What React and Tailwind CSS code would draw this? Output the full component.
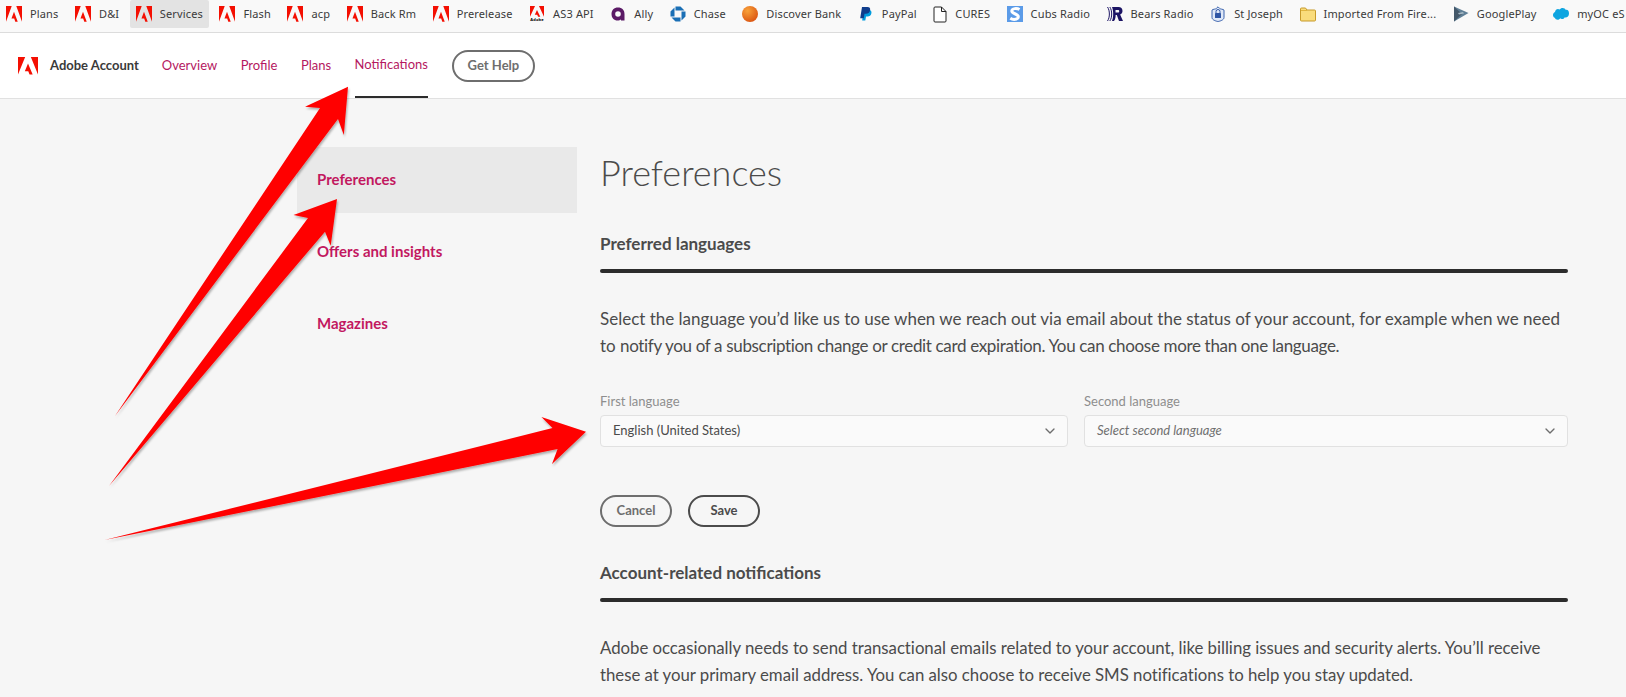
import React from "react";
import { ChevronDown } from "lucide-react";

const sans = "font-['Lato',sans-serif]";
const barFont = "font-['Noto_Sans',sans-serif]";

function AdobeMark({ className = "w-4 h-4" }) {
  return (
    <svg viewBox="0 0 24 22" className={className} preserveAspectRatio="none">
      <path fill="#f40f02" d="M0 0h8.6L0 21.5zM24 0h-8.6L24 21.5zM12 7.9l5.6 13.6h-3.7l-1.6-4.2H8.2z" />
    </svg>
  );
}

const Ally = () => (
  <svg viewBox="0 0 16 16" className="w-4 h-4">
    <path fill="#5b1a66" fillRule="evenodd" d="M8 1.5c4 0 6.500 2.600 6.500 6.500v6.500H11v-1.300C10 14.200 9 14.600 7.600 14.600 4 14.600 1.500 11.800 1.500 8 1.500 4.200 4 1.500 8 1.500zM8 5.200a2.800 2.800 0 100 5.600 2.800 2.800 0 000-5.600z" />
  </svg>
);
const Chase = () => (
  <svg viewBox="0 0 16 16" className="w-4 h-4">
    <path fill="#1a6fb5" d="M5.500 0.500H10.500L14.500 4.500H5.500zM15.500 5.500V10.500L11.500 14.500V5.500zM10.500 15.500H5.500L1.500 11.500H10.500zM0.500 10.500V5.500L4.500 1.500V10.500z" />
  </svg>
);
const Discover = () => (
  <svg viewBox="0 0 16 16" className="w-4 h-4">
    <defs>
      <radialGradient id="disc" cx="0.35" cy="0.3" r="0.8">
        <stop offset="0" stopColor="#f8a23a" />
        <stop offset="1" stopColor="#d9500f" />
      </radialGradient>
    </defs>
    <circle cx="8" cy="8" r="8" fill="url(#disc)" />
  </svg>
);
const PayPal = () => (
  <svg viewBox="0 0 16 16" className="w-4 h-4">
    <path fill="#009cde" d="M5.500 4h5.500c2 0 2.800 1.400 2.400 3.200C13 9.400 11.500 10.500 9.500 10.500H8l-.7 4H4.200z" />
    <path fill="#0f3d8c" d="M4 1h5.500c2 0 3 1.200 2.600 3.200C11.700 6.500 10 7.800 8 7.800H6.500l-.7 4.400H2.200z" />
  </svg>
);
const Doc = () => (
  <svg viewBox="0 0 14 17" className="w-[14px] h-[17px]">
    <path fill="#fff" stroke="#222" strokeWidth="1" strokeLinejoin="round" d="M1 2a1 1 0 011-1h6.500L13 5.500V15a1 1 0 01-1 1H2a1 1 0 01-1-1zM8.500 1v4.500H13" />
  </svg>
);
const Cubs = () => (
  <svg viewBox="0 0 16 16" className="w-4 h-4">
    <rect width="16" height="16" fill="#5b9be8" />
    <path fill="none" stroke="#fff" strokeWidth="3" d="M12.500 3.500C10 2 5 2.200 4.800 5c-.2 3 6.600 2.500 6.500 5.800C11.200 13.800 6 14 3.300 12.300" />
  </svg>
);
const Bears = () => (
  <svg viewBox="0 0 16 16" className="w-4 h-4">
    <path fill="none" stroke="#1c1464" strokeWidth="1" d="M0.500 1c2.500 3.500 2.500 10.500 0 14M2.800 1c2.500 3.500 2.500 10.500 0 14" />
    <path fill="#1c1464" fillRule="evenodd" d="M5 1h6.500c2.500 0 4 1.500 4 4 0 1.800-1 3-2.400 3.600L16 15h-4L9.800 9H8.600c.2 2-.3 4.300-1.600 6H5c1.600-3.500 1.600-10 0-14zM8.500 4v2.500h2.500c.8 0 1.200-.5 1.200-1.300S11.800 4 11 4z" />
  </svg>
);
const Lock = () => (
  <svg viewBox="0 0 16 16" className="w-4 h-4">
    <path fill="#dfe8f7" stroke="#3a62ad" strokeWidth="1" d="M8 .8l1.600 1.600c.9.900 3.300.6 4.400 1.700v7.400C14 14 10 15.200 8 15.500 6 15.200 2 14 2 11.500V4.100c1.100-1.100 3.500-.8 4.400-1.700z" />
    <rect x="5" y="7" width="6" height="5" rx=".5" fill="#2f55a4" />
    <path fill="none" stroke="#2f55a4" strokeWidth="1" d="M6 7V5.500a2 2 0 014 0V7" />
  </svg>
);
const Folder = () => (
  <svg viewBox="0 0 16 16" className="w-4 h-4">
    <path fill="#f9dc7c" stroke="#c79a2a" strokeWidth="1" d="M.5 3a1 1 0 011-1h4l1.500 2h7.500a1 1 0 011 1v9a1 1 0 01-1 1h-13a1 1 0 01-1-1z" />
    <path fill="none" stroke="#e0b53f" strokeWidth="1" d="M1 4.500h6" />
  </svg>
);
const GPlay = () => (
  <svg viewBox="0 0 16 16" className="w-4 h-4">
    <path fill="#5f7f96" d="M1 .5L15.500 7 1 15.500z" />
    <path fill="#44586a" d="M1 .5L9 8 1 15.500z" />
    <path fill="#a5b8c4" d="M5 7l5-1 1 1.500-5 1z" />
  </svg>
);
const Cloud = () => (
  <svg viewBox="0 0 16 12" className="w-4 h-3">
    <path fill="#0ea5e0" d="M6.500 1.500C7.300.6 8.400 0 9.600 0c1.500 0 2.700.8 3.300 2 .5-.2 .9-.3 1-.2 1.500.3 2.100 2 2.100 3.700 0 2.500-1.600 4-3.600 4-.3 0-.6 0-.9-.1C11 10.700 9.800 11.300 8.800 11c-.6 0-1.200-.3-1.500-.7-.5.8-1.500 1.500-2.700 1.500-1.300 0-2.400-.8-2.800-2C.7 9.500 0 8.300 0 7c0-1.400.8-2.500 2-3C2.300 2.300 3.500 1 5 1c.6 0 1.100.2 1.500.5z" />
  </svg>
);
const AdobeOld = () => (
  <span className="w-4 h-4 flex flex-col items-center">
    <AdobeMark className="w-[14px] h-[11px]" />
    <span className="text-[4px] leading-[5px] font-bold text-black">Adobe</span>
  </span>
);

const mark = <AdobeMark />;
const bookmarks = [
  { icon: mark, label: "Plans" },
  { icon: mark, label: "D&I" },
  { icon: mark, label: "Services", active: true },
  { icon: mark, label: "Flash" },
  { icon: mark, label: "acp" },
  { icon: mark, label: "Back Rm" },
  { icon: mark, label: "Prerelease" },
  { icon: <AdobeOld />, label: "AS3 API" },
  { icon: <Ally />, label: "Ally" },
  { icon: <Chase />, label: "Chase" },
  { icon: <Discover />, label: "Discover Bank" },
  { icon: <PayPal />, label: "PayPal" },
  { icon: <Doc />, label: "CURES" },
  { icon: <Cubs />, label: "Cubs Radio" },
  { icon: <Bears />, label: "Bears Radio" },
  { icon: <Lock />, label: "St Joseph" },
  { icon: <Folder />, label: "Imported From Fire..." },
  { icon: <GPlay />, label: "GooglePlay" },
  { icon: <Cloud />, label: "myOC eS" },
];

function BookmarkBar() {
  return (
    <div className={`h-[33px] shrink-0 bg-[#f9f9f9] border-b border-[#dcdcdc] flex items-start gap-[4.5px] overflow-hidden ${barFont}`}>
      {bookmarks.map((b) => (
        <div
          key={b.label}
          className={`h-[28px] shrink-0 flex items-center gap-2 px-[6px] text-[11px] tracking-[0.15px] text-[#3a3a3a] ${b.active ? "bg-[#e3e3e3] rounded-[2px]" : ""}`}
        >
          {b.icon}
          <span className="whitespace-nowrap">{b.label}</span>
        </div>
      ))}
    </div>
  );
}

function Header() {
  const links = ["Overview", "Profile", "Plans", "Notifications"];
  return (
    <header className="h-[66px] shrink-0 bg-white border-b border-[#e1e1e1] flex items-center pl-[18px]">
      <AdobeMark className="w-5 h-[18px] mr-[12px]" />
      <span className="text-[13px] font-bold text-[#3a3a3a] mr-[23px]">Adobe Account</span>
      <nav className="flex gap-[23.5px] h-full">
        {links.map((l) => (
          <a
            key={l}
            className={`h-full flex items-center text-[13px] text-[#b5185f] ${l === "Notifications" ? "border-b-2 border-[#2c2c2c]" : ""}`}
          >
            {l}
          </a>
        ))}
      </nav>
      <button className="ml-[24px] h-8 w-[83px] rounded-full border-2 border-[#6e6e6e] text-[13px] font-bold text-[#6e6e6e]">
        Get Help
      </button>
    </header>
  );
}

function Sidebar() {
  const items = ["Preferences", "Offers and insights", "Magazines"];
  return (
    <aside className="w-[280px] shrink-0 mt-[48px] flex flex-col gap-[6px]">
      {items.map((l, i) => (
        <a
          key={l}
          className={`h-[66px] flex items-center pl-5 pb-[2px] text-[15px] font-bold text-[#c2185f] ${i === 0 ? "bg-[#e9e9e9]" : ""}`}
        >
          {l}
        </a>
      ))}
    </aside>
  );
}

function Section({ children }) {
  return (
    <div>
      <h2 className="text-[17px] leading-6 font-bold text-[#4b4b4b]">{children}</h2>
      <div className="mt-[13px] h-[4px] rounded-full bg-[#2c2c2c]" />
    </div>
  );
}

function Select({ label, value, italic, className }) {
  return (
    <div className={className}>
      <div className="text-[13px] leading-[18px] text-[#8e8e8e] mb-[5px]">{label}</div>
      <div className="h-8 rounded-[4px] border border-[#e1e1e1] bg-[#fafafa] flex items-center justify-between pl-3 pr-[9px]">
        <span className={`text-[13px] ${italic ? "italic text-[#707070]" : "text-[#4b4b4b]"}`}>{value}</span>
        <ChevronDown size={16} strokeWidth={2} className="text-[#6e6e6e]" />
      </div>
    </div>
  );
}

function Arrow({ points }) {
  return <polygon points={points} fill="#ff0000" filter="url(#arrowShadow)" />;
}

export default function App() {
  return (
    <div className={`relative w-[1626px] h-[697px] overflow-hidden bg-[#f6f6f6] flex flex-col ${sans}`}>
      <BookmarkBar />
      <Header />
      <div className="flex pl-[297px] pr-[58px]">
        <Sidebar />
        <main className="flex-1 ml-[23px] min-w-0">
          <h1 className="mt-[49px] text-[36px] leading-[48px] font-light text-[#4b4b4b]">Preferences</h1>
          <div className="mt-[36px]">
            <Section>Preferred languages</Section>
          </div>
          <p className="mt-[32px] text-[17px] leading-[27px] text-[#4b4b4b]">
            Select the language you’d like us to use when we reach out via email about the status of your account, for example when we need to{" "}
            <span className="tracking-[-0.34px]">notify you of a subscription change or credit card expiration. You can choose more than one language.</span>
          </p>
          <div className="mt-[33px] flex gap-4">
            <Select className="w-[468px]" label="First language" value="English (United States)" />
            <Select className="flex-1" label="Second language" value="Select second language" italic />
          </div>
          <div className="mt-12 flex gap-4">
            <button className="h-8 w-[72px] rounded-full border-2 border-[#6e6e6e] text-[13px] font-bold text-[#6e6e6e]">Cancel</button>
            <button className="h-8 w-[72px] rounded-full border-2 border-[#4b4b4b] text-[13px] font-bold text-[#4b4b4b]">Save</button>
          </div>
          <div className="mt-[34px]">
            <Section>Account-related notifications</Section>
          </div>
          <p className="mt-[32px] text-[16.8px] tracking-[-0.02px] leading-[27px] text-[#4b4b4b]">
            Adobe occasionally needs to send transactional emails related to your account, like billing issues and security alerts. You’ll receive these at your primary email address. You can also choose to receive SMS notifications to help you stay updated.
          </p>
        </main>
      </div>
      <svg className="absolute inset-0 pointer-events-none" width="1626" height="697">
        <defs>
          <filter id="arrowShadow" x="-10%" y="-10%" width="120%" height="120%">
            <feDropShadow dx="1" dy="2" stdDeviation="1.2" floodColor="#000" floodOpacity="0.3" />
          </filter>
        </defs>
        <Arrow points="115,416 320,108 305,106.700 348,86.700 343.800,135 338,119" />
        <Arrow points="109,486 308,218 293.500,215 337,199 330.700,245.700 325,231.700" />
        <Arrow points="104.500,540 552.500,428 541.400,417 586,431.700 552,464 557.600,449" />
      </svg>
    </div>
  );
}
